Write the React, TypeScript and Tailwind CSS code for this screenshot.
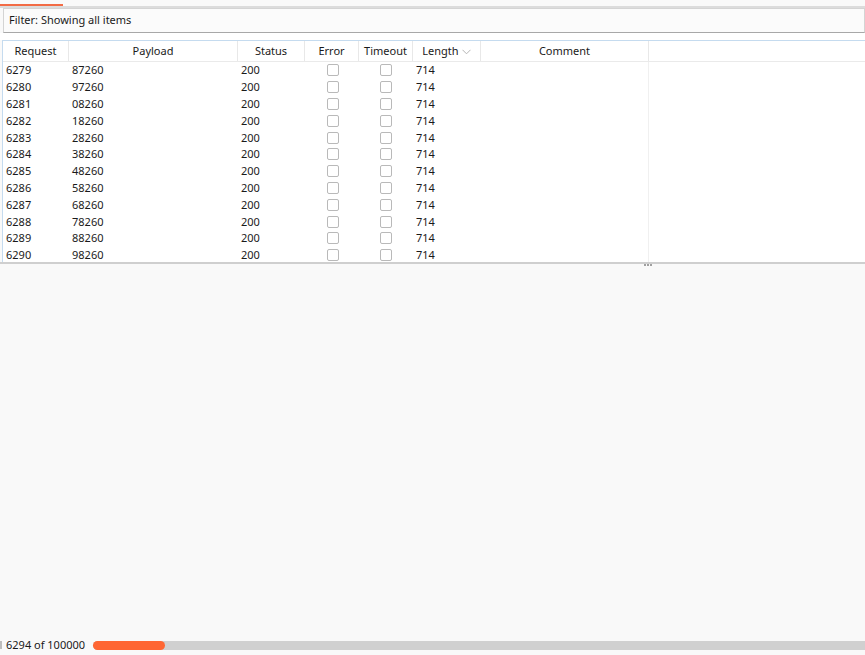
import React from "react";

const rows = [
  ["6279", "87260"],
  ["6280", "97260"],
  ["6281", "08260"],
  ["6282", "18260"],
  ["6283", "28260"],
  ["6284", "38260"],
  ["6285", "48260"],
  ["6286", "58260"],
  ["6287", "68260"],
  ["6288", "78260"],
  ["6289", "88260"],
  ["6290", "98260"],
];

const cols = "grid grid-cols-[66px_169px_67px_54px_54px_68px_168px_1fr]";

function Box() {
  return <div className="w-[12px] h-[12px] rounded-[2px] border border-[#b9b9b9] bg-white" />;
}

export default function App() {
  return (
    <div
      className="w-[865px] h-[655px] bg-[#f9f9f9] flex flex-col text-[11px] text-[#1a1a1a] overflow-hidden"
      style={{ fontFamily: '"Noto Sans", "Open Sans", sans-serif' }}
    >
      <div className="h-[4px]" />
      <div className="w-[63px] h-[2px] bg-[#f26b45]" />
      <div className="h-[2px] bg-[#dcdcdc]" />
      <div className="ml-[3px] h-[25px] border border-[#d4d4d4] border-b-[#a8a8a8] bg-[#fbfbfb] flex items-center pl-[5px]">
        Filter: Showing all items
      </div>
      <div className="h-[7px] bg-white" />
      <div className="ml-[2px] h-[222px] border-t border-l border-[#c5dbef] bg-white flex flex-col">
        <div className={`${cols} h-[21px] border-b border-[#eaeaea] shrink-0`}>
          <div className="flex items-center justify-center border-r border-[#e8e8e8]">Request</div>
          <div className="flex items-center justify-center border-r border-[#e8e8e8]">Payload</div>
          <div className="flex items-center justify-center border-r border-[#e8e8e8]">Status</div>
          <div className="flex items-center justify-center border-r border-[#e8e8e8]">Error</div>
          <div className="flex items-center justify-center border-r border-[#e8e8e8]">Timeout</div>
          <div className="flex items-center justify-center border-r border-[#e8e8e8] gap-[3px]">
            Length
            <svg width="9" height="6" viewBox="0 0 9 6" className="mt-[2px]">
              <path d="M0.5 0.8 L4.5 4.8 L8.5 0.8" fill="none" stroke="#b5b5b5" strokeWidth="1" />
            </svg>
          </div>
          <div className="flex items-center justify-center border-r border-[#e8e8e8]">Comment</div>
          <div />
        </div>
        <div className="flex-1 overflow-hidden">
          {rows.map(([r, p]) => (
            <div key={r} className={`${cols} h-[16.8px] leading-[16px]`}>
              <div className="pl-[3px] flex items-center">{r}</div>
              <div className="pl-[3px] flex items-center">{p}</div>
              <div className="pl-[3px] flex items-center">200</div>
              <div className="flex items-center justify-center pl-[1px]"><Box /></div>
              <div className="flex items-center justify-center"><Box /></div>
              <div className="pl-[3px] flex items-center">714</div>
              <div className="border-r border-[#f0f0f0]" />
              <div />
            </div>
          ))}
        </div>
      </div>
      <div className="h-[2px] bg-[#cfcfcf]" />
      <div className="relative h-0">
        <div className="absolute left-[644px] top-[0px] flex gap-[1px]">
          <div className="w-[2px] h-[2px] bg-[#a0a0a0]" />
          <div className="w-[2px] h-[2px] bg-[#a0a0a0]" />
          <div className="w-[2px] h-[2px] bg-[#a0a0a0]" />
        </div>
      </div>
      <div className="flex-1" />
      <div className="h-[16px] flex items-center mb-[2px]">
        <div className="w-[2px] h-[8px] bg-[#bdbdbd]" />
        <div className="ml-[4px] w-[87px]">6294 of 100000</div>
        <div className="flex-1 h-[9px] bg-[#d0d0d0] rounded-l-full relative">
          <div className="absolute left-0 top-0 h-[9px] w-[72px] bg-[#ff6633] rounded-full" />
        </div>
      </div>
    </div>
  );
}
